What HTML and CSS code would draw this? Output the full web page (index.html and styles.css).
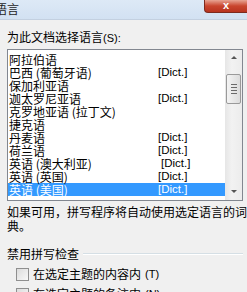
FILE: index.html
```html
<!DOCTYPE html>
<html>
	<head>
		<meta charset="UTF-8">
		<title>语言</title>
		<link rel="stylesheet" href="styles.css">
	</head>
	<body>
		<div class="titlebar">
			<span class="title">语言</span>
			<span class="close">x</span>
		</div>

		<div class="content">
			<p class="label">为此文档选择语言<span class="key">(S):</span></p>

			<div class="listbox">
				<ul class="items">
					<li><span class="name">阿拉伯语</span></li>
					<li><span class="name">巴西 (葡萄牙语)</span><span class="dict">[Dict.]</span></li>
					<li><span class="name">保加利亚语</span></li>
					<li><span class="name">迦太罗尼亚语</span><span class="dict">[Dict.]</span></li>
					<li><span class="name">克罗地亚语 (拉丁文)</span></li>
					<li><span class="name">捷克语</span></li>
					<li><span class="name">丹麦语</span><span class="dict">[Dict.]</span></li>
					<li><span class="name">荷兰语</span><span class="dict">[Dict.]</span></li>
					<li><span class="name">英语 (澳大利亚)</span><span class="dict shift">[Dict.]</span></li>
					<li><span class="name">英语 (英国)</span><span class="dict">[Dict.]</span></li>
					<li class="selected"><span class="name">英语 (美国)</span><span class="dict">[Dict.]</span></li>
				</ul>
				<div class="scrollbar">
					<div class="arrow up"></div>
					<div class="track">
						<div class="thumb"><span></span><span></span><span></span><span></span></div>
					</div>
					<div class="arrow down"></div>
				</div>
			</div>

			<p class="hint">如果可用，拼写程序将自动使用选定语言的词典。</p>

			<div class="group">
				<div class="group-title"><span>禁用拼写检查</span></div>
				<label class="check"><span class="box"></span>在选定主题的内容内<span class="key">(T)</span></label>
				<label class="check"><span class="box"></span>在选定主题的备注内<span class="key">(N)</span></label>
			</div>
		</div>
	</body>
</html>
```

FILE: styles.css
```css
html, body, p, ul, li {
	margin: 0;
	padding: 0;
}
body {
	width: 247px;
	height: 292px;
	overflow: hidden;
	background: #f0f0f0;
	font-family: "Noto Sans CJK SC", "Liberation Sans", sans-serif;
	font-size: 12px;
	color: #000;
}
.key {
	font-family: "Liberation Sans", sans-serif;
	font-size: 11px;
}
.titlebar {
	display: flex;
	justify-content: space-between;
	height: 19px;
	background: linear-gradient(#dde9f6, #d2e1f2);
	border-bottom: 1px solid #c3d0e0;
}
.title {
	margin-left: -5px;
	line-height: 18px;
	font-size: 12px;
	color: #1e1e1e;
}
.close {
	width: 42px;
	height: 12px;
	border: 1px solid #7d2a1e;
	border-top: none;
	border-right: none;
	border-radius: 0 0 0 4px;
	background: linear-gradient(#e8a493, #c9452e 50%, #b83420);
	color: #fff;
	font-weight: bold;
	font-family: "Liberation Sans", sans-serif;
	font-size: 11px;
	line-height: 10px;
	text-align: center;
}
.content {
	padding: 9px 0 0 7px;
}
.label {
	line-height: 16px;
	margin-bottom: 3px;
}
.listbox {
	display: flex;
	height: 150px;
	margin-right: 4px;
	background: #fff;
	border: 1px solid #828790;
}
.items {
	flex: 1;
	list-style: none;
	padding-top: 3px;
}
.items li {
	display: flex;
	height: 13px;
	line-height: 13px;
	padding-left: 1px;
}
.items .name {
	width: 149px;
}
.items .dict {
	font-family: "Liberation Sans", sans-serif;
	font-size: 11.5px;
}
.items .dict.shift {
	margin-left: 3px;
}
.items li.selected {
	background: #3399ff;
	color: #fff;
}
.scrollbar {
	display: flex;
	flex-direction: column;
	width: 17px;
	background: linear-gradient(90deg, #e6e6e6, #f2f2f2 40%, #ececec);
}
.arrow {
	height: 17px;
	position: relative;
}
.arrow::after {
	content: "";
	position: absolute;
	left: 6px;
	border-left: 3px solid transparent;
	border-right: 3px solid transparent;
}
.arrow.up::after {
	top: 6px;
	border-bottom: 3px solid #555;
}
.arrow.down::after {
	top: 7px;
	border-top: 3px solid #555;
}
.track {
	flex: 1;
	padding-top: 7px;
}
.thumb {
	display: flex;
	flex-direction: column;
	justify-content: center;
	gap: 2px;
	height: 28px;
	margin: 0 1px;
	border: 1px solid #9a9a9a;
	border-radius: 2px;
	background: linear-gradient(90deg, #f4f4f4, #dcdcdc);
}
.thumb span {
	display: block;
	width: 6px;
	height: 1px;
	margin-left: 4px;
	background: #6a6a6a;
}
.hint {
	margin-top: 4px;
	line-height: 14px;
}
.group {
	margin-top: 14px;
}
.group-title {
	display: flex;
	align-items: center;
	gap: 4px;
	margin-right: 4px;
	line-height: 14px;
}
.group-title::after {
	content: "";
	flex: 1;
	height: 0;
	border-top: 1px solid #d5dfe5;
	border-bottom: 1px solid #fff;
}
.check {
	display: flex;
	align-items: center;
	gap: 4px;
	margin-top: 6px;
	margin-left: 9px;
	line-height: 14px;
}
.box {
	width: 11px;
	height: 11px;
	border: 1px solid #8f8f8f;
	background: linear-gradient(135deg, #dcdcdc, #f8f8f8);
}
```
